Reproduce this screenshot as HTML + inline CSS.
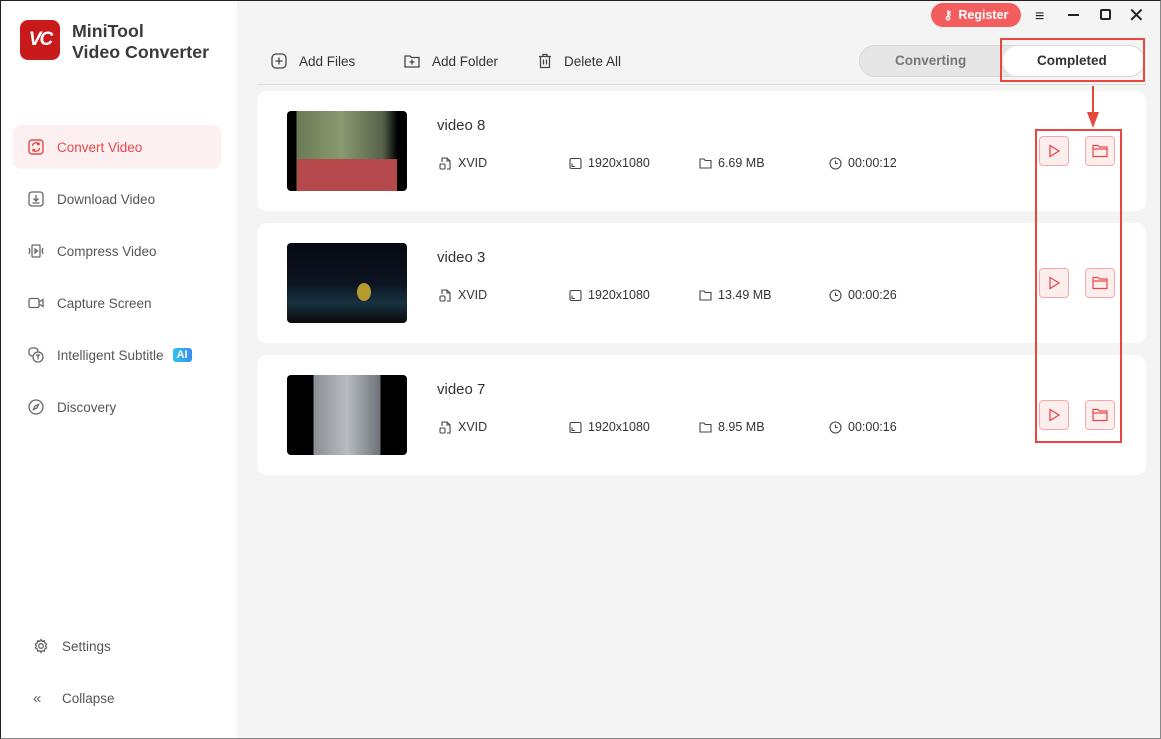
<!DOCTYPE html>
<html><head><meta charset="utf-8"><style>
*{margin:0;padding:0;box-sizing:border-box}
body{width:1161px;height:739px;overflow:hidden;font-family:"Liberation Sans",sans-serif;background:#f4f4f4;position:relative;color:#333}
.a{position:absolute}
#win{left:0;top:0;width:1161px;height:739px;border:1px solid #222;border-right-color:#888;border-bottom-color:#888;pointer-events:none;z-index:9}
#side{left:0;top:0;width:237px;height:739px;background:#fff}
.nav{position:absolute;left:28px;font-size:13.5px;color:#555;display:flex;align-items:center;gap:13px}
.nav svg{width:16px;height:16px}
.card{position:absolute;left:257px;width:889px;height:120px;background:#fff;border-radius:10px}
.thumb{position:absolute;left:30px;top:20px;width:120px;height:80px;border-radius:4px;background:#000;overflow:hidden}
.title{position:absolute;left:180px;top:26px;font-size:15px;color:#333}
.meta{position:absolute;top:65px;font-size:12.5px;color:#333;display:flex;align-items:center;gap:6px}
.meta svg{width:13px;height:13px}
.btn{position:absolute;width:30px;height:30px;border:1px solid #f4a8a8;background:#fdeeee;border-radius:4px;display:flex;align-items:center;justify-content:center}
.tb{position:absolute;top:53px;font-size:13.5px;color:#333;display:flex;align-items:center;gap:12px}
</style></head><body>
<div id="side" class="a">
 <div class="a" style="left:20px;top:20px;width:40px;height:40px;border-radius:8px;background:#c8191b;color:#fff;font-weight:bold;font-size:19px;font-style:italic;display:flex;align-items:center;justify-content:center;letter-spacing:-2px">VC</div>
 <div class="a" style="left:72px;top:21px;font-size:17.8px;font-weight:bold;color:#3a3a3a;line-height:21px">MiniTool<br>Video Converter</div>
 <div class="a" style="left:13px;top:125px;width:208px;height:44px;border-radius:8px;background:#fdf0f0"></div>
 <div class="nav" style="top:139px;color:#e8474a"><svg viewBox="0 0 16 16" fill="none" stroke="#e8474a" stroke-width="1.4"><rect x="1" y="1" width="14" height="14" rx="3"/><path d="M4.5 7a3.5 3.5 0 0 1 6.5-1.5M11.5 9a3.5 3.5 0 0 1-6.5 1.5M11 3.5v2h-2M5 12.5v-2h2"/></svg>Convert Video</div>
 <div class="nav" style="top:191px"><svg viewBox="0 0 16 16" fill="none" stroke="#666" stroke-width="1.3"><rect x="1" y="1" width="14" height="14" rx="3"/><path d="M8 4v6M5.5 7.5 8 10l2.5-2.5M4.5 12h7"/></svg>Download Video</div>
 <div class="nav" style="top:243px"><svg viewBox="0 0 16 16" fill="none" stroke="#666" stroke-width="1.3"><rect x="4" y="2" width="8" height="12" rx="1"/><path d="M7 6l2.5 2L7 10zM1 5q1.5 3 0 6M15 5q-1.5 3 0 6"/></svg>Compress Video</div>
 <div class="nav" style="top:295px"><svg viewBox="0 0 16 16" fill="none" stroke="#666" stroke-width="1.3"><rect x="1" y="3.5" width="10" height="9" rx="1.5"/><path d="M11 7l4-2.5v7L11 9"/></svg>Capture Screen</div>
 <div class="nav" style="top:347px"><svg viewBox="0 0 16 16" fill="none" stroke="#666" stroke-width="1.3"><rect x="1" y="1" width="9" height="8" rx="3"/><circle cx="10" cy="10" r="5" fill="#fff"/><path d="M7.8 8h4.4M10 8v4.5"/></svg>Intelligent Subtitle <span style="background:linear-gradient(90deg,#2ec3f0,#3a8ef0);color:#fff;font-size:11px;font-weight:bold;padding:1px 4px;border-radius:3px;margin-left:-4px">AI</span></div>
 <div class="nav" style="top:399px"><svg viewBox="0 0 16 16" fill="none" stroke="#666" stroke-width="1.3"><circle cx="8" cy="8" r="7"/><path d="M10.5 5.5 9 9 5.5 10.5 7 7z"/></svg>Discovery</div>
 <div class="nav" style="top:638px;left:33px"><svg viewBox="0 0 16 16" fill="none" stroke="#666" stroke-width="1.3"><circle cx="8" cy="8" r="2.3"/><path d="M8 1.5l1.2 1.8 2.1-.5.5 2.1 1.8 1.2-1 1.9 1 1.9-1.8 1.2-.5 2.1-2.1-.5L8 14.5l-1.2-1.8-2.1.5-.5-2.1-1.8-1.2 1-1.9-1-1.9 1.8-1.2.5-2.1 2.1.5z"/></svg>Settings</div>
 <div class="nav" style="top:690px;left:33px"><span style="width:16px;font-size:15px;color:#666">«</span>Collapse</div>
</div>

<div class="tb" style="left:271px"><svg width="16" height="16" viewBox="0 0 16 16" fill="none" stroke="#444" stroke-width="1.3"><rect x="1" y="1" width="14" height="14" rx="4"/><path d="M8 4.5v7M4.5 8h7"/></svg>Add Files</div>
<div class="tb" style="left:404px"><svg width="16" height="16" viewBox="0 0 16 16" fill="none" stroke="#444" stroke-width="1.3"><path d="M1 3h5l1.5 1.5H15V14H1z"/><path d="M8 6.5v5M5.5 9h5"/></svg>Add Folder</div>
<div class="tb" style="left:538px"><svg width="14" height="16" viewBox="0 0 14 16" fill="none" stroke="#444" stroke-width="1.3"><path d="M1 3.5h12M5 3.5V1.5h4v2M2.5 3.5V14.5h9V3.5M5.5 6.5v5M8.5 6.5v5"/></svg>Delete All</div>
<div class="a" style="left:257px;top:84px;width:889px;height:1px;background:#ddd"></div>

<div class="a" style="left:931px;top:3px;width:90px;height:24px;border-radius:12px;background:#f45d5d;color:#fff;font-weight:bold;font-size:12.5px;display:flex;align-items:center;justify-content:center;gap:6px"><span style="font-size:12px">⚷</span>Register</div>
<div class="a" style="left:1035px;top:8px;font-size:16px;color:#222">≡</div>
<div class="a" style="left:1068px;top:14px;width:11px;height:2px;background:#222"></div>
<div class="a" style="left:1100px;top:9px;width:11px;height:11px;border:2px solid #222;border-radius:2px"></div>
<div class="a" style="left:1128px;top:3px;font-size:20px;color:#222">✕</div>

<div class="a" style="left:859px;top:45px;width:286px;height:32px;border-radius:16px;background:#e6e6e6;border:1px solid #d6d6d6"></div>
<div class="a" style="left:895px;top:53px;font-size:13.5px;font-weight:bold;color:#777">Converting</div>
<div class="a" style="left:1003px;top:46px;width:141px;height:30px;border-radius:15px;background:#fff"></div>
<div class="a" style="left:1037px;top:53px;font-size:13.5px;font-weight:bold;color:#333">Completed</div>
<div class="a" style="left:1000px;top:38px;width:145px;height:44px;border:2px solid #e8473e"></div>

<div class="card" style="top:91px"><div class="thumb" style="background:linear-gradient(90deg,#000 8%,#6a7a55 8%,#8a9a70 45%,#56624a 80%,#000 92%)"><div class="a" style="left:10px;top:48px;width:100px;height:32px;background:#b5484a"></div></div><div class="title">video 8</div></div>
<div class="card" style="top:223px"><div class="thumb" style="background:linear-gradient(180deg,#050810,#0b1420 50%,#183040 75%,#0a0a0a)"><div class="a" style="left:70px;top:40px;width:14px;height:18px;background:#b59a30;border-radius:50%"></div></div><div class="title">video 3</div></div>
<div class="card" style="top:355px"><div class="thumb" style="background:linear-gradient(90deg,#000 22%,#8a8f94 22%,#b7bcc0 50%,#6d7278 78%,#000 78%)"></div><div class="title">video 7</div></div>

<div id="metas"></div>
<script>
const rows=[[164,'6.69 MB','00:00:12'],[296,'13.49 MB','00:00:26'],[428,'8.95 MB','00:00:16']];
let h='';
for(const [y,s,t] of rows){
 const top=y-8;
 h+=`<div class="meta" style="left:439px;top:${top}px"><svg viewBox="0 0 13 13" fill="none" stroke="#444" stroke-width="1.1"><path d="M3 5V1h5l3 3v8H8M8 1v3h3"/><rect x="1" y="7" width="5" height="5" rx="1"/></svg>XVID</div>`;
 h+=`<div class="meta" style="left:569px;top:${top}px"><svg viewBox="0 0 13 13" fill="none" stroke="#444" stroke-width="1.1"><rect x="1" y="1.5" width="11" height="10" rx="1.5"/><path d="M3 6.5v3h3"/></svg>1920x1080</div>`;
 h+=`<div class="meta" style="left:699px;top:${top}px"><svg viewBox="0 0 13 13" fill="none" stroke="#444" stroke-width="1.1"><path d="M1 2h4l1.3 1.5H12V11H1z"/></svg>${s}</div>`;
 h+=`<div class="meta" style="left:829px;top:${top}px"><svg viewBox="0 0 13 13" fill="none" stroke="#444" stroke-width="1.1"><circle cx="6.5" cy="6.5" r="5.5"/><path d="M6.5 3.5v3h2.5"/></svg>${t}</div>`;
 const by=y-28;
 h+=`<div class="btn" style="left:1039px;top:${by}px"><svg width="14" height="14" viewBox="0 0 14 14" fill="none" stroke="#e8474a" stroke-width="1.3"><path d="M3 1.5l9 5.5-9 5.5z"/></svg></div>`;
 h+=`<div class="btn" style="left:1085px;top:${by}px"><svg width="16" height="14" viewBox="0 0 16 14" fill="none" stroke="#e8474a" stroke-width="1.2"><path d="M1 1.5h5l1.5 1.5H15V12.5H1zM1 5h14"/></svg></div>`;
}
document.getElementById('metas').innerHTML=h;
</script>
<div class="a" style="left:1035px;top:129px;width:87px;height:314px;border:2px solid #e8473e"></div>
<svg class="a" style="left:1085px;top:86px" width="16" height="44"><path d="M8 0v30" stroke="#e8473e" stroke-width="2"/><path d="M2 26l6 16 6-16z" fill="#e8473e"/></svg>
<div id="win" class="a"></div>
</body></html>
